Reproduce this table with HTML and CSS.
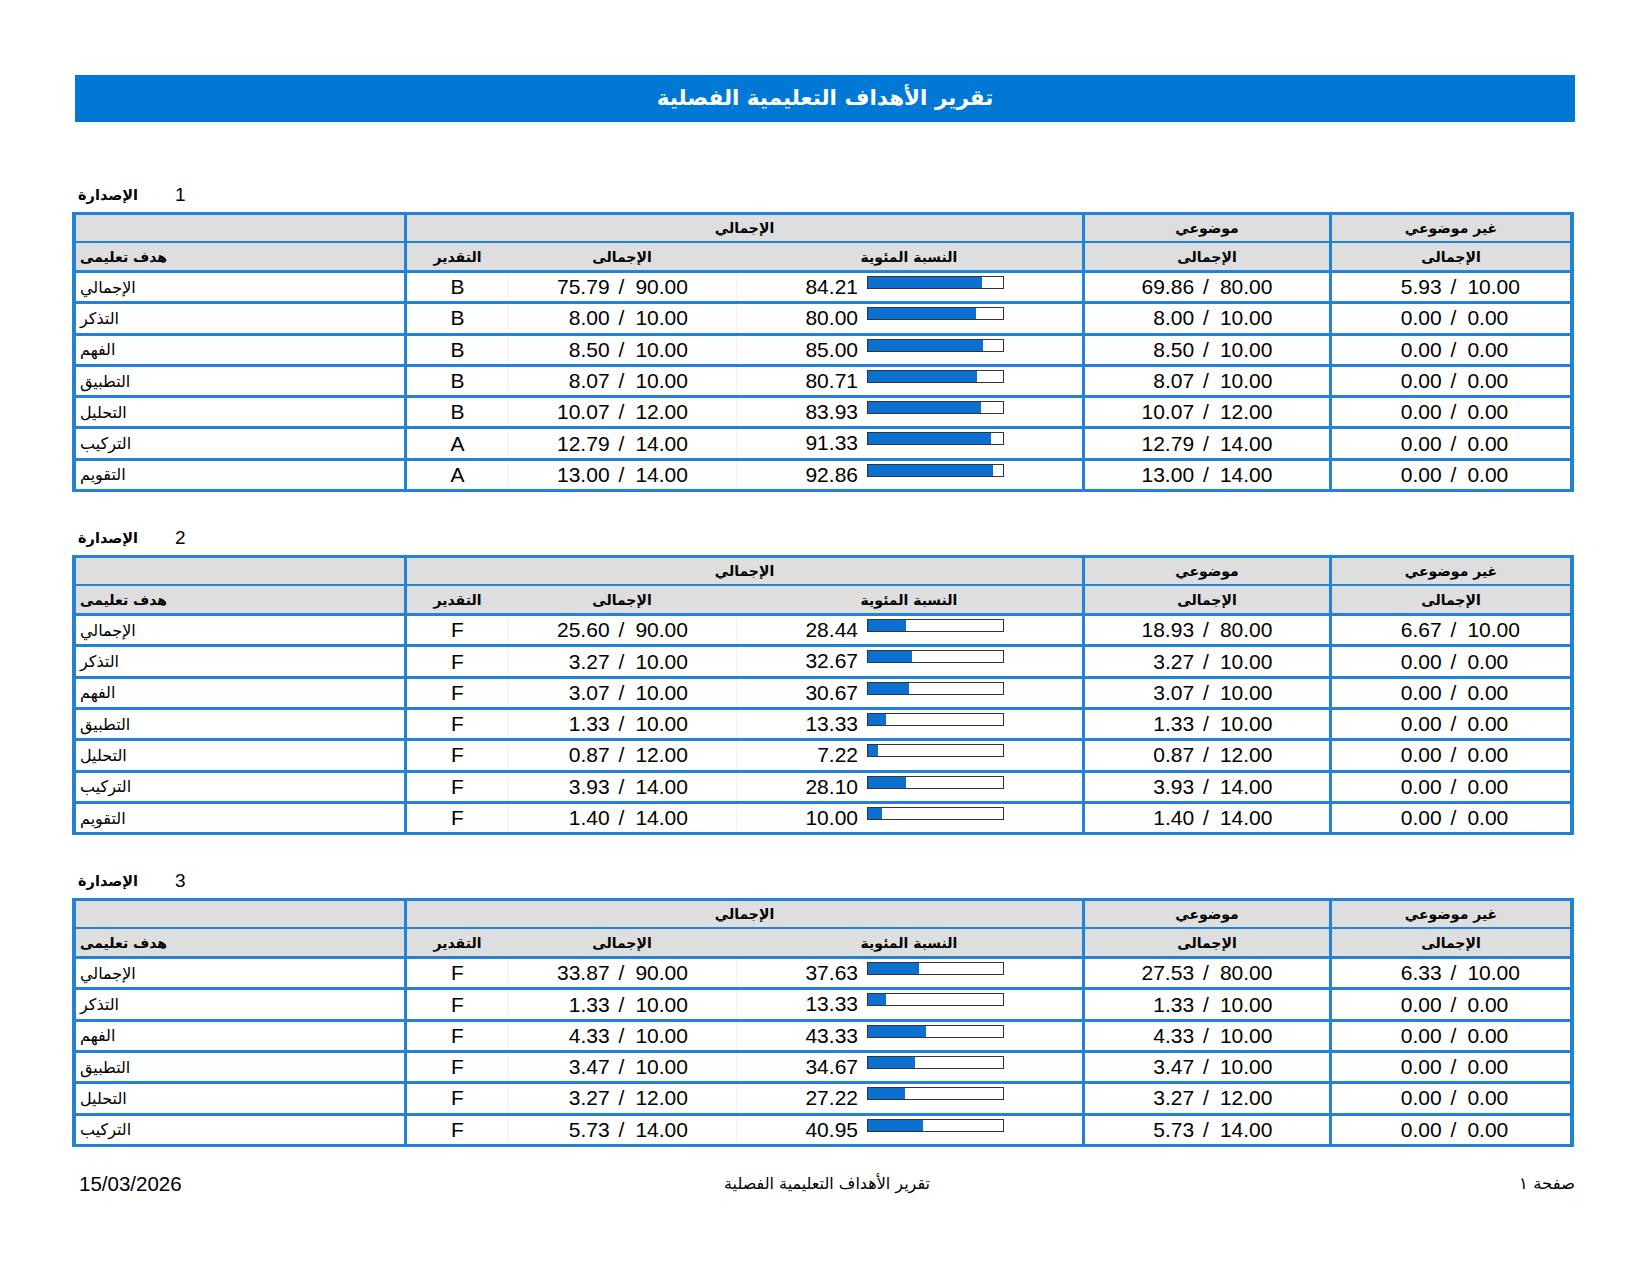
FILE: index.html
```html
<!DOCTYPE html>
<html lang="ar">
<head>
    <meta charset="UTF-8">
    <title>تقرير الأهداف التعليمية الفصلية</title>
    <link rel="stylesheet" href="styles.css">
</head>
<body>
<div class="page">
    <div class="title-bar">تقرير الأهداف التعليمية الفصلية</div>

    <!-- الإصدارة 1 -->
    <section class="version">
        <div class="caption"><span class="cap-label">الإصدارة</span><span class="cap-num">1</span></div>
        <div class="grid">
            <div class="row head-top">
                <div class="c goal"></div>
                <div class="c group">الإجمالي</div>
                <div class="c subj">موضوعي</div>
                <div class="c nonsubj">غير موضوعي</div>
            </div>
            <div class="row head-sub">
                <div class="c goal">هدف تعليمى</div>
                <div class="c grade">التقدير</div>
                <div class="c total">الإجمالى</div>
                <div class="c pct">النسبة المئوية</div>
                <div class="c subj">الإجمالى</div>
                <div class="c nonsubj">الإجمالى</div>
            </div>
            <div class="row data">
                <div class="c goal">الإجمالي</div>
                <div class="c grade">B</div>
                <div class="c total"><span class="a">75.79</span><span class="s">/</span><span class="b">90.00</span></div>
                <div class="c pct"><span class="pv">84.21</span><span class="bar"><span class="fill" style="width:84.21%"></span></span></div>
                <div class="c subj"><span class="a">69.86</span><span class="s">/</span><span class="b">80.00</span></div>
                <div class="c nonsubj"><span class="a">5.93</span><span class="s">/</span><span class="b">10.00</span></div>
            </div>
            <div class="row data">
                <div class="c goal">التذكر</div>
                <div class="c grade">B</div>
                <div class="c total"><span class="a">8.00</span><span class="s">/</span><span class="b">10.00</span></div>
                <div class="c pct"><span class="pv">80.00</span><span class="bar"><span class="fill" style="width:80%"></span></span></div>
                <div class="c subj"><span class="a">8.00</span><span class="s">/</span><span class="b">10.00</span></div>
                <div class="c nonsubj"><span class="a">0.00</span><span class="s">/</span><span class="b">0.00</span></div>
            </div>
            <div class="row data">
                <div class="c goal">الفهم</div>
                <div class="c grade">B</div>
                <div class="c total"><span class="a">8.50</span><span class="s">/</span><span class="b">10.00</span></div>
                <div class="c pct"><span class="pv">85.00</span><span class="bar"><span class="fill" style="width:85%"></span></span></div>
                <div class="c subj"><span class="a">8.50</span><span class="s">/</span><span class="b">10.00</span></div>
                <div class="c nonsubj"><span class="a">0.00</span><span class="s">/</span><span class="b">0.00</span></div>
            </div>
            <div class="row data">
                <div class="c goal">التطبيق</div>
                <div class="c grade">B</div>
                <div class="c total"><span class="a">8.07</span><span class="s">/</span><span class="b">10.00</span></div>
                <div class="c pct"><span class="pv">80.71</span><span class="bar"><span class="fill" style="width:80.71%"></span></span></div>
                <div class="c subj"><span class="a">8.07</span><span class="s">/</span><span class="b">10.00</span></div>
                <div class="c nonsubj"><span class="a">0.00</span><span class="s">/</span><span class="b">0.00</span></div>
            </div>
            <div class="row data">
                <div class="c goal">التحليل</div>
                <div class="c grade">B</div>
                <div class="c total"><span class="a">10.07</span><span class="s">/</span><span class="b">12.00</span></div>
                <div class="c pct"><span class="pv">83.93</span><span class="bar"><span class="fill" style="width:83.93%"></span></span></div>
                <div class="c subj"><span class="a">10.07</span><span class="s">/</span><span class="b">12.00</span></div>
                <div class="c nonsubj"><span class="a">0.00</span><span class="s">/</span><span class="b">0.00</span></div>
            </div>
            <div class="row data">
                <div class="c goal">التركيب</div>
                <div class="c grade">A</div>
                <div class="c total"><span class="a">12.79</span><span class="s">/</span><span class="b">14.00</span></div>
                <div class="c pct"><span class="pv">91.33</span><span class="bar"><span class="fill" style="width:91.33%"></span></span></div>
                <div class="c subj"><span class="a">12.79</span><span class="s">/</span><span class="b">14.00</span></div>
                <div class="c nonsubj"><span class="a">0.00</span><span class="s">/</span><span class="b">0.00</span></div>
            </div>
            <div class="row data">
                <div class="c goal">التقويم</div>
                <div class="c grade">A</div>
                <div class="c total"><span class="a">13.00</span><span class="s">/</span><span class="b">14.00</span></div>
                <div class="c pct"><span class="pv">92.86</span><span class="bar"><span class="fill" style="width:92.86%"></span></span></div>
                <div class="c subj"><span class="a">13.00</span><span class="s">/</span><span class="b">14.00</span></div>
                <div class="c nonsubj"><span class="a">0.00</span><span class="s">/</span><span class="b">0.00</span></div>
            </div>
        </div>
    </section>

    <!-- الإصدارة 2 -->
    <section class="version">
        <div class="caption"><span class="cap-label">الإصدارة</span><span class="cap-num">2</span></div>
        <div class="grid">
            <div class="row head-top">
                <div class="c goal"></div>
                <div class="c group">الإجمالي</div>
                <div class="c subj">موضوعي</div>
                <div class="c nonsubj">غير موضوعي</div>
            </div>
            <div class="row head-sub">
                <div class="c goal">هدف تعليمى</div>
                <div class="c grade">التقدير</div>
                <div class="c total">الإجمالى</div>
                <div class="c pct">النسبة المئوية</div>
                <div class="c subj">الإجمالى</div>
                <div class="c nonsubj">الإجمالى</div>
            </div>
            <div class="row data">
                <div class="c goal">الإجمالي</div>
                <div class="c grade">F</div>
                <div class="c total"><span class="a">25.60</span><span class="s">/</span><span class="b">90.00</span></div>
                <div class="c pct"><span class="pv">28.44</span><span class="bar"><span class="fill" style="width:28.44%"></span></span></div>
                <div class="c subj"><span class="a">18.93</span><span class="s">/</span><span class="b">80.00</span></div>
                <div class="c nonsubj"><span class="a">6.67</span><span class="s">/</span><span class="b">10.00</span></div>
            </div>
            <div class="row data">
                <div class="c goal">التذكر</div>
                <div class="c grade">F</div>
                <div class="c total"><span class="a">3.27</span><span class="s">/</span><span class="b">10.00</span></div>
                <div class="c pct"><span class="pv">32.67</span><span class="bar"><span class="fill" style="width:32.67%"></span></span></div>
                <div class="c subj"><span class="a">3.27</span><span class="s">/</span><span class="b">10.00</span></div>
                <div class="c nonsubj"><span class="a">0.00</span><span class="s">/</span><span class="b">0.00</span></div>
            </div>
            <div class="row data">
                <div class="c goal">الفهم</div>
                <div class="c grade">F</div>
                <div class="c total"><span class="a">3.07</span><span class="s">/</span><span class="b">10.00</span></div>
                <div class="c pct"><span class="pv">30.67</span><span class="bar"><span class="fill" style="width:30.67%"></span></span></div>
                <div class="c subj"><span class="a">3.07</span><span class="s">/</span><span class="b">10.00</span></div>
                <div class="c nonsubj"><span class="a">0.00</span><span class="s">/</span><span class="b">0.00</span></div>
            </div>
            <div class="row data">
                <div class="c goal">التطبيق</div>
                <div class="c grade">F</div>
                <div class="c total"><span class="a">1.33</span><span class="s">/</span><span class="b">10.00</span></div>
                <div class="c pct"><span class="pv">13.33</span><span class="bar"><span class="fill" style="width:13.33%"></span></span></div>
                <div class="c subj"><span class="a">1.33</span><span class="s">/</span><span class="b">10.00</span></div>
                <div class="c nonsubj"><span class="a">0.00</span><span class="s">/</span><span class="b">0.00</span></div>
            </div>
            <div class="row data">
                <div class="c goal">التحليل</div>
                <div class="c grade">F</div>
                <div class="c total"><span class="a">0.87</span><span class="s">/</span><span class="b">12.00</span></div>
                <div class="c pct"><span class="pv">7.22</span><span class="bar"><span class="fill" style="width:7.22%"></span></span></div>
                <div class="c subj"><span class="a">0.87</span><span class="s">/</span><span class="b">12.00</span></div>
                <div class="c nonsubj"><span class="a">0.00</span><span class="s">/</span><span class="b">0.00</span></div>
            </div>
            <div class="row data">
                <div class="c goal">التركيب</div>
                <div class="c grade">F</div>
                <div class="c total"><span class="a">3.93</span><span class="s">/</span><span class="b">14.00</span></div>
                <div class="c pct"><span class="pv">28.10</span><span class="bar"><span class="fill" style="width:28.10%"></span></span></div>
                <div class="c subj"><span class="a">3.93</span><span class="s">/</span><span class="b">14.00</span></div>
                <div class="c nonsubj"><span class="a">0.00</span><span class="s">/</span><span class="b">0.00</span></div>
            </div>
            <div class="row data">
                <div class="c goal">التقويم</div>
                <div class="c grade">F</div>
                <div class="c total"><span class="a">1.40</span><span class="s">/</span><span class="b">14.00</span></div>
                <div class="c pct"><span class="pv">10.00</span><span class="bar"><span class="fill" style="width:10%"></span></span></div>
                <div class="c subj"><span class="a">1.40</span><span class="s">/</span><span class="b">14.00</span></div>
                <div class="c nonsubj"><span class="a">0.00</span><span class="s">/</span><span class="b">0.00</span></div>
            </div>
        </div>
    </section>

    <!-- الإصدارة 3 -->
    <section class="version">
        <div class="caption"><span class="cap-label">الإصدارة</span><span class="cap-num">3</span></div>
        <div class="grid">
            <div class="row head-top">
                <div class="c goal"></div>
                <div class="c group">الإجمالي</div>
                <div class="c subj">موضوعي</div>
                <div class="c nonsubj">غير موضوعي</div>
            </div>
            <div class="row head-sub">
                <div class="c goal">هدف تعليمى</div>
                <div class="c grade">التقدير</div>
                <div class="c total">الإجمالى</div>
                <div class="c pct">النسبة المئوية</div>
                <div class="c subj">الإجمالى</div>
                <div class="c nonsubj">الإجمالى</div>
            </div>
            <div class="row data">
                <div class="c goal">الإجمالي</div>
                <div class="c grade">F</div>
                <div class="c total"><span class="a">33.87</span><span class="s">/</span><span class="b">90.00</span></div>
                <div class="c pct"><span class="pv">37.63</span><span class="bar"><span class="fill" style="width:37.63%"></span></span></div>
                <div class="c subj"><span class="a">27.53</span><span class="s">/</span><span class="b">80.00</span></div>
                <div class="c nonsubj"><span class="a">6.33</span><span class="s">/</span><span class="b">10.00</span></div>
            </div>
            <div class="row data">
                <div class="c goal">التذكر</div>
                <div class="c grade">F</div>
                <div class="c total"><span class="a">1.33</span><span class="s">/</span><span class="b">10.00</span></div>
                <div class="c pct"><span class="pv">13.33</span><span class="bar"><span class="fill" style="width:13.33%"></span></span></div>
                <div class="c subj"><span class="a">1.33</span><span class="s">/</span><span class="b">10.00</span></div>
                <div class="c nonsubj"><span class="a">0.00</span><span class="s">/</span><span class="b">0.00</span></div>
            </div>
            <div class="row data">
                <div class="c goal">الفهم</div>
                <div class="c grade">F</div>
                <div class="c total"><span class="a">4.33</span><span class="s">/</span><span class="b">10.00</span></div>
                <div class="c pct"><span class="pv">43.33</span><span class="bar"><span class="fill" style="width:43.33%"></span></span></div>
                <div class="c subj"><span class="a">4.33</span><span class="s">/</span><span class="b">10.00</span></div>
                <div class="c nonsubj"><span class="a">0.00</span><span class="s">/</span><span class="b">0.00</span></div>
            </div>
            <div class="row data">
                <div class="c goal">التطبيق</div>
                <div class="c grade">F</div>
                <div class="c total"><span class="a">3.47</span><span class="s">/</span><span class="b">10.00</span></div>
                <div class="c pct"><span class="pv">34.67</span><span class="bar"><span class="fill" style="width:34.67%"></span></span></div>
                <div class="c subj"><span class="a">3.47</span><span class="s">/</span><span class="b">10.00</span></div>
                <div class="c nonsubj"><span class="a">0.00</span><span class="s">/</span><span class="b">0.00</span></div>
            </div>
            <div class="row data">
                <div class="c goal">التحليل</div>
                <div class="c grade">F</div>
                <div class="c total"><span class="a">3.27</span><span class="s">/</span><span class="b">12.00</span></div>
                <div class="c pct"><span class="pv">27.22</span><span class="bar"><span class="fill" style="width:27.22%"></span></span></div>
                <div class="c subj"><span class="a">3.27</span><span class="s">/</span><span class="b">12.00</span></div>
                <div class="c nonsubj"><span class="a">0.00</span><span class="s">/</span><span class="b">0.00</span></div>
            </div>
            <div class="row data">
                <div class="c goal">التركيب</div>
                <div class="c grade">F</div>
                <div class="c total"><span class="a">5.73</span><span class="s">/</span><span class="b">14.00</span></div>
                <div class="c pct"><span class="pv">40.95</span><span class="bar"><span class="fill" style="width:40.95%"></span></span></div>
                <div class="c subj"><span class="a">5.73</span><span class="s">/</span><span class="b">14.00</span></div>
                <div class="c nonsubj"><span class="a">0.00</span><span class="s">/</span><span class="b">0.00</span></div>
            </div>
        </div>
    </section>

    <footer class="foot">
        <span class="foot-date">15/03/2026</span>
        <span class="foot-title">تقرير الأهداف التعليمية الفصلية</span>
        <span class="foot-page">صفحة ١</span>
    </footer>
</div>
</body>
</html>
```

FILE: styles.css
```css
*{margin:0;padding:0;box-sizing:border-box;}
body{
    background:#fff;
    color:#000;
    font-family:"Liberation Sans","DejaVu Sans",sans-serif;
}
.page{
    width:1575px;
    padding:75px 0 0 72px;
}
.title-bar{
    width:1500px;
    height:47px;
    margin-left:3px;
    background-color:#0078d4;
    color:#fff;
    font-family:"DejaVu Sans",sans-serif;
    font-weight:bold;
    font-size:21.5px;
    line-height:45px;
    text-align:center;
}
/* section */
.caption{
    display:flex;
    align-items:center;
    height:24px;
    margin-top:34px;
    padding-left:6px;
}
.version:first-of-type .caption{
    margin-top:61px;
}
.cap-label{
    font-family:"DejaVu Sans",sans-serif;
    font-weight:bold;
    font-size:14.5px;
}
.cap-num{
    margin-left:37px;
    font-size:19px;
}
.grid{
    width:1502px;
    margin-top:5px;
    border:3px solid #2282d6;
    border-left-width:4px;
    border-right-width:4px;
}
.row{
    display:grid;
    grid-template-columns:328px 104px 228px 346px 247px 241px;
}
.c{
    display:flex;
    align-items:center;
    justify-content:center;
    white-space:nowrap;
}
.head-top,.head-sub{
    background-color:#dedede;
    font-family:"DejaVu Sans",sans-serif;
    font-weight:bold;
    font-size:14px;
}
.head-top{
    height:28px;
    border-bottom:2px solid #2282d6;
}
.head-top .group{
    grid-column:2 / 5;
}
.head-sub{
    height:27px;
}
.data{
    height:31.3px;
    border-top:3px solid #2282d6;
    font-size:21px;
}
.goal{
    justify-content:flex-start;
    padding-left:4px;
}
.data .goal{
    font-family:"DejaVu Sans",sans-serif;
    font-size:16px;
}
.grade,.head-top .group{
    border-left:3px solid #2282d6;
}
.subj,.nonsubj{
    border-left:3px solid #2282d6;
}
.data .nonsubj{
    padding-left:7px;
}
.data .total,.data .pct{
    border-left:1px solid #f0f3f6;
}
.a{
    display:inline-block;
    width:62px;
    text-align:right;
}
.s{
    display:inline-block;
    padding:0 11px 0 9px;
}
.b{
    display:inline-block;
    width:62px;
    text-align:left;
}
.data .pct{
    justify-content:flex-start;
    align-items:flex-start;
}
.pv{
    width:121px;
    text-align:right;
    line-height:28px;
}
.bar{
    display:block;
    width:137px;
    height:13px;
    margin:3px 0 0 9px;
    border:1px solid #333;
    background:#fff;
}
.fill{
    display:block;
    height:100%;
    background-color:#0b70d0;
}
/* footer */
.foot{
    display:grid;
    grid-template-columns:1fr auto 1fr;
    align-items:center;
    width:1503px;
    height:24px;
    margin-top:25px;
    padding-left:7px;
}
.foot-date{
    font-size:20.5px;
}
.foot-title{
    font-family:"DejaVu Sans",sans-serif;
    font-size:16px;
}
.foot-page{
    justify-self:end;
    font-family:"DejaVu Sans",sans-serif;
    font-size:16.5px;
}
```
